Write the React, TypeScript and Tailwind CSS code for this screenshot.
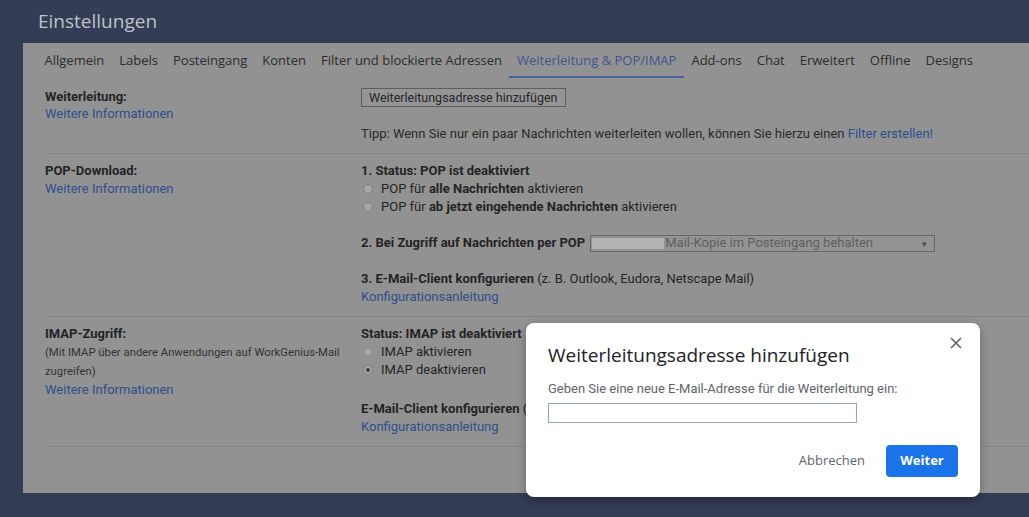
import React from "react";

const tabs = [
  "Allgemein",
  "Labels",
  "Posteingang",
  "Konten",
  "Filter und blockierte Adressen",
  "Weiterleitung & POP/IMAP",
  "Add-ons",
  "Chat",
  "Erweitert",
  "Offline",
  "Designs",
];

function Radio({ checked }: { checked?: boolean }) {
  return (
    <span className="inline-flex w-[10px] h-[10px] rounded-full border border-[#808080] bg-[#a6a6a6] items-center justify-center mr-[8px] ml-[2px]">
      {checked && <span className="w-[4px] h-[4px] rounded-full bg-[#3a3a3a]" />}
    </span>
  );
}

function Link({ children }: { children: React.ReactNode }) {
  return <span className="text-[#304e8b]">{children}</span>;
}

export default function App() {
  return (
    <div
      className="relative w-[1029px] h-[517px] bg-[#333d55] overflow-hidden"
      style={{ fontFamily: "Roboto, 'Liberation Sans', sans-serif" }}
    >
      {/* header */}
      <div className="h-[43px] flex items-center pl-[38px]">
        <span
          className="text-[19px] text-[#bfc2c9]"
          style={{ fontFamily: "'Open Sans', sans-serif" }}
        >
          Einstellungen
        </span>
      </div>

      {/* panel */}
      <div className="ml-[23px] h-[450px] bg-[#929292] text-[#242424]">
        {/* tabs */}
        <div
          className="flex pl-[14px] h-[35px] text-[13px] text-[#2c2c2c]"
          style={{ fontFamily: "'Open Sans', sans-serif" }}
        >
          {tabs.map((t, i) => (
            <div
              key={t}
              className={
                i === 5
                  ? "px-[7.5px] pt-[8px] leading-[18px] border-b-2 border-[#47609a] text-[#3e5591]"
                  : "px-[7.5px] pt-[8px] leading-[18px] border-b-2 border-transparent"
              }
            >
              {t}
            </div>
          ))}
        </div>

        {/* content */}
        <div className="pl-[22px] text-[13px] leading-[18px]">
          {/* row 1 */}
          <div className="flex pt-[10px] pb-[10px] border-b border-[#858585]">
            <div className="w-[316px] shrink-0">
              <div className="font-bold">Weiterleitung:</div>
              <div className="-mt-[1px]">
                <Link>Weitere Informationen</Link>
              </div>
            </div>
            <div>
              <div className="inline-flex h-[19px] items-center px-[7px] border border-[#5e5e5e] bg-[#959595] text-[#262626] text-[12.5px]">
                Weiterleitungsadresse hinzufügen
              </div>
              <div className="mt-[18px] text-[#2a2a2a]">
                Tipp: Wenn Sie nur ein paar Nachrichten weiterleiten wollen, können Sie hierzu einen{" "}
                <Link>Filter erstellen!</Link>
              </div>
            </div>
          </div>

          {/* row 2 */}
          <div className="flex pt-[8px] pb-[10px] border-b border-[#858585]">
            <div className="w-[316px] shrink-0">
              <div className="font-bold">POP-Download:</div>
              <div>
                <Link>Weitere Informationen</Link>
              </div>
            </div>
            <div>
              <div className="font-bold">1. Status: POP ist deaktiviert</div>
              <div className="flex items-center">
                <Radio />
                <span>
                  POP für <b>alle Nachrichten</b> aktivieren
                </span>
              </div>
              <div className="flex items-center">
                <Radio />
                <span>
                  POP für <b>ab jetzt eingehende Nachrichten</b> aktivieren
                </span>
              </div>
              <div className="mt-[18px] flex items-center">
                <span className="font-bold mr-[5px]">2. Bei Zugriff auf Nachrichten per POP</span>
                <div className="relative flex items-center w-[345px] h-[17px] border border-[#686868] bg-[#939393] text-[#5f5f5f]">
                  <span className="ml-[1px] w-[72px] h-[11px] bg-[#bcbcbc] opacity-80" />
                  <span className="ml-[1px]">Mail-Kopie im Posteingang behalten</span>
                  <span className="absolute right-[6px] top-0 text-[8px] text-[#4a4a4a]">▼</span>
                </div>
              </div>
              <div className="mt-[18px]">
                <b>3. E-Mail-Client konfigurieren</b> (z. B. Outlook, Eudora, Netscape Mail)
              </div>
              <div>
                <Link>Konfigurationsanleitung</Link>
              </div>
            </div>
          </div>

          {/* row 3 */}
          <div className="flex pt-[8px] pb-[10px] border-b border-[#858585]">
            <div className="w-[316px] shrink-0">
              <div className="font-bold">IMAP-Zugriff:</div>
              <div className="text-[11.3px] leading-[19px] text-[#333]">
                (Mit IMAP über andere Anwendungen auf WorkGenius-Mail
                <br />
                zugreifen)
              </div>
              <div>
                <Link>Weitere Informationen</Link>
              </div>
            </div>
            <div>
              <div className="font-bold">Status: IMAP ist deaktiviert</div>
              <div className="flex items-center">
                <Radio />
                <span>IMAP aktivieren</span>
              </div>
              <div className="flex items-center">
                <Radio checked />
                <span>IMAP deaktivieren</span>
              </div>
              <div className="mt-[21px]">
                <b>E-Mail-Client konfigurieren</b> (z. B. Outlook, Eudora, Netscape Mail)
              </div>
              <div>
                <Link>Konfigurationsanleitung</Link>
              </div>
            </div>
          </div>
        </div>
      </div>

      {/* dialog */}
      <div className="absolute left-[526px] top-[323px] w-[454px] h-[174px] bg-white rounded-[8px] shadow-[0_4px_10px_rgba(0,0,0,0.3)] px-[22px]">
        <div className="flex justify-between pt-[20px]">
          <div
            className="text-[19px] leading-[24px] text-[#202124]"
            style={{ fontFamily: "'Open Sans', Roboto, sans-serif" }}
          >
            Weiterleitungsadresse hinzufügen
          </div>
          <svg
            className="mt-[-7px] mr-[-5px]"
            width="14"
            height="14"
            viewBox="0 0 14 14"
            fill="none"
            stroke="#5f6368"
            strokeWidth="1.6"
          >
            <path d="M2 2L12 12M12 2L2 12" />
          </svg>
        </div>
        <div className="mt-[14px] text-[13px] leading-[16px] text-[#5f6368]">
          Geben Sie eine neue E-Mail-Adresse für die Weiterleitung ein:
        </div>
        <div className="mt-[6px] w-[309px] h-[20px] border border-[#8ea3c4]" />
        <div className="flex justify-end items-center mt-[22px]">
          <span
            className="text-[13px] font-medium text-[#5f6368] mr-[21px]"
            style={{ fontFamily: "'Open Sans', Roboto, sans-serif" }}
          >
            Abbrechen
          </span>
          <div
            className="w-[72px] h-[32px] rounded-[4px] bg-[#1a73e8] text-white text-[13px] font-bold flex items-center justify-center"
            style={{ fontFamily: "'Open Sans', Roboto, sans-serif" }}
          >
            Weiter
          </div>
        </div>
      </div>
    </div>
  );
}
